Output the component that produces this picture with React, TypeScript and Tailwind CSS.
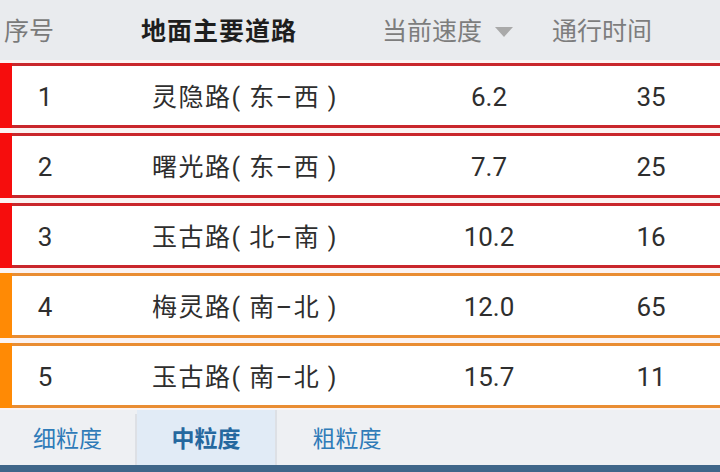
import React from "react";

type Row = { n: number; name: string; speed: string; time: string; level: "red" | "orange" };

const rows: Row[] = [
  { n: 1, name: "灵隐路( 东–西 )", speed: "6.2", time: "35", level: "red" },
  { n: 2, name: "曙光路( 东–西 )", speed: "7.7", time: "25", level: "red" },
  { n: 3, name: "玉古路( 北–南 )", speed: "10.2", time: "16", level: "red" },
  { n: 4, name: "梅灵路( 南–北 )", speed: "12.0", time: "65", level: "orange" },
  { n: 5, name: "玉古路( 南–北 )", speed: "15.7", time: "11", level: "orange" },
];

export default function App() {
  return (
    <div
      className="w-[720px] h-[472px] overflow-hidden flex flex-col bg-[#fbf3f2]"
      style={{ fontFamily: "Roboto, 'Noto Sans CJK SC', sans-serif" }}
    >
      {/* header */}
      <div className="h-[60px] shrink-0 bg-[#e9ebee] flex items-center pt-[2px] text-[25px] leading-none">
        <div className="w-[141px] pl-[4px] text-[#7a7a7a]">序号</div>
        <div className="w-[241px] font-bold text-[#1e1e1e] tracking-[1px]">地面主要道路</div>
        <div className="w-[170px] flex items-center text-[#7d7d7d]">
          <span>当前速度</span>
          <svg width="20" height="12" viewBox="0 0 20 12" className="ml-[12px] mt-[1px]">
            <path d="M1 1 L19 1 L10 11 Z" fill="#a9a9a9" />
          </svg>
        </div>
        <div className="text-[#7d7d7d]">通行时间</div>
      </div>

      {/* rows */}
      <div className="flex flex-col gap-[5px] pt-[3px]">
        {rows.map((r) => {
          const red = r.level === "red";
          return (
            <div key={r.n} className="h-[65px] flex">
              <div className={red ? "w-[12px] bg-[#f60d0d]" : "w-[12px] bg-[#ff8a05]"} />
              <div
                className={
                  "flex-1 flex items-center pt-[3px] bg-white border-y-[3px] text-[#2e2e2e] leading-none " +
                  (red ? "border-[#c9272c]" : "border-[#e98d33]")
                }
              >
                <div className="w-[66px] text-center text-[26px]">{r.n}</div>
                <div className="w-[340px] pl-[74px] text-[25px] tracking-[1.5px] whitespace-pre">{r.name}</div>
                <div className="w-[142px] text-center text-[26px]">{r.speed}</div>
                <div className="flex-1 pl-[22px] text-center text-[26px]">{r.time}</div>
              </div>
            </div>
          );
        })}
      </div>

      {/* tabs */}
      <div className="mt-[2px] h-[55px] shrink-0 bg-[#eef0f3] flex pt-[4px] text-[23px] text-[#2f7bb8] leading-none">
        <div className="w-[137px] flex items-center justify-center border-r-2 border-[#dde0e5]">细粒度</div>
        <div className="w-[140px] -mt-[4px] pt-[4px] flex items-center justify-center bg-[#e1ebf6] font-bold text-[#25689f] border-r-2 border-[#dde0e5]">
          中粒度
        </div>
        <div className="w-[140px] flex items-center justify-center">粗粒度</div>
      </div>
      <div className="flex-1 bg-[#3f6689]" />
    </div>
  );
}
